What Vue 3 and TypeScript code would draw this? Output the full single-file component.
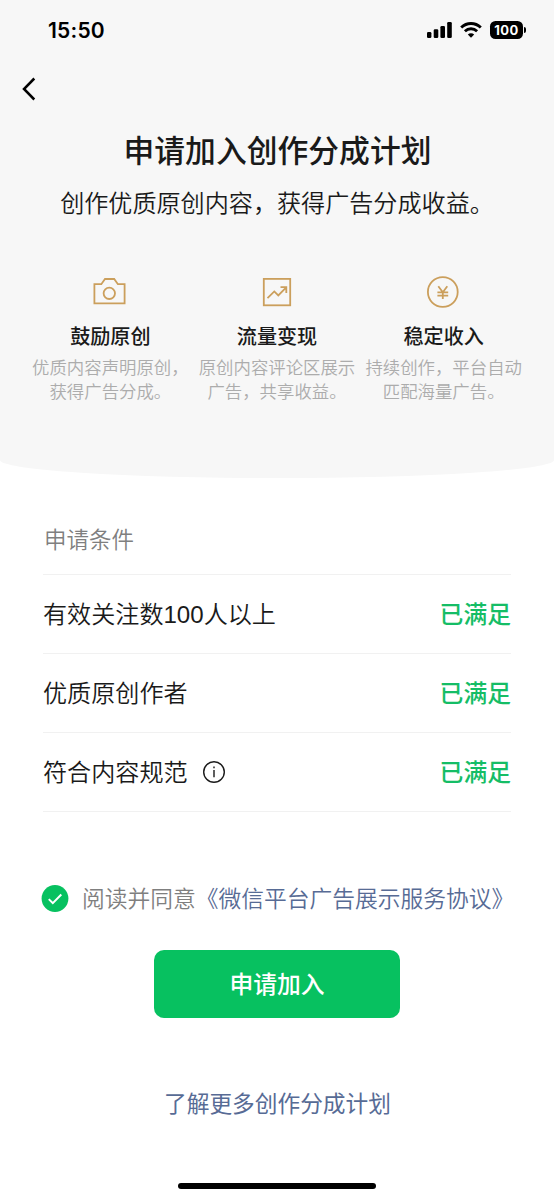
<script setup lang="ts">
interface Feature {
  icon: 'camera' | 'chart' | 'coin'
  title: string
  lines: [string, string]
}

interface Condition {
  label: string
  status: string
  info?: boolean
}

const features: Feature[] = [
  { icon: 'camera', title: '鼓励原创', lines: ['优质内容声明原创，', '获得广告分成。'] },
  { icon: 'chart', title: '流量变现', lines: ['原创内容评论区展示', '广告，共享收益。'] },
  { icon: 'coin', title: '稳定收入', lines: ['持续创作，平台自动', '匹配海量广告。'] },
]

const conditions: Condition[] = [
  { label: '有效关注数100人以上', status: '已满足' },
  { label: '优质原创作者', status: '已满足' },
  { label: '符合内容规范', status: '已满足', info: true },
]
</script>

<template>
  <div class="screen">
    <header class="hero">
      <div class="status-bar">
        <span class="time">15:50</span>
        <div class="indicators">
          <svg class="signal" width="25" height="16" viewBox="0 0 25 16">
            <rect x="0" y="10" width="4.4" height="6" rx="1.3" />
            <rect x="6.7" y="7.2" width="4.6" height="8.8" rx="1.3" />
            <rect x="13.4" y="3.9" width="4.6" height="12.1" rx="1.3" />
            <rect x="20.2" y="0" width="4.6" height="16" rx="1.3" />
          </svg>
          <svg class="wifi" width="22" height="16" viewBox="0 0 22 16">
            <path d="M1.2 5.5C6.8.2 15.2.2 20.8 5.5" />
            <path d="M4.9 9.2c3.5-3.2 8.7-3.2 12.2 0" />
            <path class="dot" d="M11 15.7 7.8 12.4c1.8-1.6 4.6-1.6 6.4 0z" />
          </svg>
          <div class="battery"><span class="level">100</span><i class="cap"></i></div>
        </div>
      </div>
      <nav class="nav">
        <svg width="14" height="24" viewBox="0 0 14 24">
          <path d="M12.3 1.5 2 12l10.3 10.5" />
        </svg>
      </nav>
      <h1>申请加入创作分成计划</h1>
      <p class="subtitle">创作优质原创内容，获得广告分成收益。</p>
      <ul class="features">
        <li v-for="f in features" :key="f.title">
          <svg class="icon" width="34" height="34" viewBox="0 0 34 34">
            <template v-if="f.icon === 'camera'">
              <path d="M1.4 9.2h6.9l3.7-5.2h9.2l3.7 5.2h6.7v19.2H1.4z" />
              <circle cx="16.3" cy="18.3" r="5.7" />
            </template>
            <template v-else-if="f.icon === 'chart'">
              <rect x="3.8" y="3.9" width="26.4" height="26.4" />
              <path d="m7.5 23.2 6.8-6.8 4 4 7.7-7.8M20.5 12.2h5.8v5.8" />
            </template>
            <template v-else>
              <circle cx="15.8" cy="17" r="14.9" />
              <path d="m11.3 11.2 4.5 6 4.5-6M15.8 17.2v6.8M10.4 17.4h10.8M10.4 20.6h10.8" />
            </template>
          </svg>
          <h2>{{ f.title }}</h2>
          <p v-for="line in f.lines" :key="line">{{ line }}</p>
        </li>
      </ul>
    </header>

    <section class="conditions">
      <h3>申请条件</h3>
      <div v-for="c in conditions" :key="c.label" class="row">
        <span class="label">{{ c.label }}</span>
        <svg v-if="c.info" class="info" width="24" height="24" viewBox="0 0 24 24">
          <circle cx="12" cy="12" r="10.3" />
          <path d="M12 10v7.3M12 6.4v1.9" />
        </svg>
        <span class="status">{{ c.status }}</span>
      </div>
    </section>

    <footer class="actions">
      <div class="agreement">
        <svg width="28" height="28" viewBox="0 0 28 28">
          <circle cx="14" cy="13.5" r="13.4" />
          <path d="m7.8 14.1 4 4 8.5-8.6" />
        </svg>
        <span class="agree-text">阅读并同意<a>《微信平台广告展示服务协议》</a></span>
      </div>
      <button type="button">申请加入</button>
      <a class="more">了解更多创作分成计划</a>
    </footer>
    <div class="home-indicator"></div>
  </div>
</template>

<style>
body {
  margin: 0;
  background: #fff;
}
</style>

<style scoped>
.screen {
  display: flex;
  flex-direction: column;
  width: 554px;
  height: 1200px;
  overflow: hidden;
  background: #fff;
  color: #1a1a1a;
  font-family: "Liberation Sans", "Noto Sans CJK SC", sans-serif;
  font-weight: 350;
  white-space: nowrap;
}

h1, h2, h3, p, ul {
  margin: 0;
  padding: 0;
  font-weight: 350;
}

.hero {
  box-sizing: border-box;
  flex: none;
  height: 478px;
  background: #f7f7f7;
  border-radius: 0 0 50% 50% / 0 0 18px 18px;
}

.status-bar {
  display: flex;
  justify-content: space-between;
  align-items: center;
  height: 60px;
  padding: 0 31px 0 48px;
}

.time {
  padding-top: 2px;
  font: 600 21px/26px Inter, sans-serif;
  color: #000;
  letter-spacing: 0.2px;
}

.indicators {
  display: flex;
  align-items: center;
}

.signal {
  margin-right: 8px;
}

.wifi {
  margin-right: 8px;
  fill: none;
  stroke: #000;
  stroke-width: 2.9;
}

.wifi .dot {
  fill: #000;
  stroke: none;
}

.battery {
  position: relative;
  width: 33px;
  height: 18px;
  border-radius: 5.5px;
  background: #000;
  color: #fff;
  font: 700 13px/18px Inter, sans-serif;
  letter-spacing: 0.5px;
  text-align: center;
}

.cap {
  position: absolute;
  top: 6px;
  right: -3px;
  width: 2px;
  height: 6px;
  border-radius: 0 2px 2px 0;
  background: #000;
}

.nav {
  height: 24px;
  padding: 17px 0 0 22px;
}

.nav svg {
  display: block;
  fill: none;
  stroke: #000;
  stroke-width: 2.5;
}

h1 {
  margin: 29px 0 0 1px;
  font-size: 30.8px;
  line-height: 44px;
  font-weight: 500;
  text-align: center;
}

.subtitle {
  margin-top: 12px;
  font-size: 24.1px;
  line-height: 36px;
  text-align: center;
}

.features {
  display: grid;
  grid-template-columns: repeat(3, 1fr);
  margin: 53px 27px 0;
  list-style: none;
}

.features li {
  display: flex;
  flex-direction: column;
  align-items: center;
}

.icon {
  fill: none;
  stroke: #cb9f5c;
  stroke-width: 1.8;
}

h2 {
  margin: 13px 0 4px;
  font-size: 20.1px;
  line-height: 30px;
  font-weight: 500;
}

.features p {
  font-size: 17.4px;
  line-height: 24px;
  color: #acacac;
}

.conditions {
  margin: 0 43px;
}

h3 {
  height: 96px;
  padding-left: 1px;
  font-size: 22.5px;
  line-height: 126px;
  color: #7f7f7f;
}

.row {
  display: flex;
  align-items: center;
  box-sizing: border-box;
  height: 79px;
  border-top: 1px solid #f1f1f1;
  font-size: 24.1px;
  line-height: 36px;
}

.row:last-child {
  height: 80px;
  border-bottom: 1px solid #f1f1f1;
}

.label,
.status {
  padding-top: 2px;
}

.info {
  margin-left: 14px;
  fill: none;
  stroke: #1a1a1a;
  stroke-width: 1.4;
}

.status {
  margin-left: auto;
  font-size: 23.8px;
  font-weight: 500;
  color: #15bd66;
}

.actions {
  display: flex;
  flex-direction: column;
  align-items: center;
}

.agreement {
  display: flex;
  align-items: center;
  align-self: flex-start;
  height: 36px;
  margin: 69px 0 0 41px;
}

.agreement circle {
  fill: #07c160;
}

.agreement path {
  fill: none;
  stroke: #fff;
  stroke-width: 2;
}

.agree-text {
  margin-left: 13px;
  font-size: 22.75px;
  line-height: 36px;
  color: #7f7f7f;
}

.agree-text a {
  color: #576b95;
}

button {
  width: 246px;
  height: 68px;
  margin-top: 33px;
  padding: 2px 0 0;
  border: 0;
  border-radius: 10px;
  background: #07c160;
  color: #fff;
  font: inherit;
  font-size: 23.8px;
  font-weight: 500;
  line-height: 36px;
}

.more {
  margin: 68px 0 0 1px;
  font-size: 22.7px;
  line-height: 36px;
  font-weight: 400;
  color: #576b95;
}

.home-indicator {
  width: 198px;
  height: 6px;
  margin: 61px auto 0;
  border-radius: 3px;
  background: #000;
}
</style>
